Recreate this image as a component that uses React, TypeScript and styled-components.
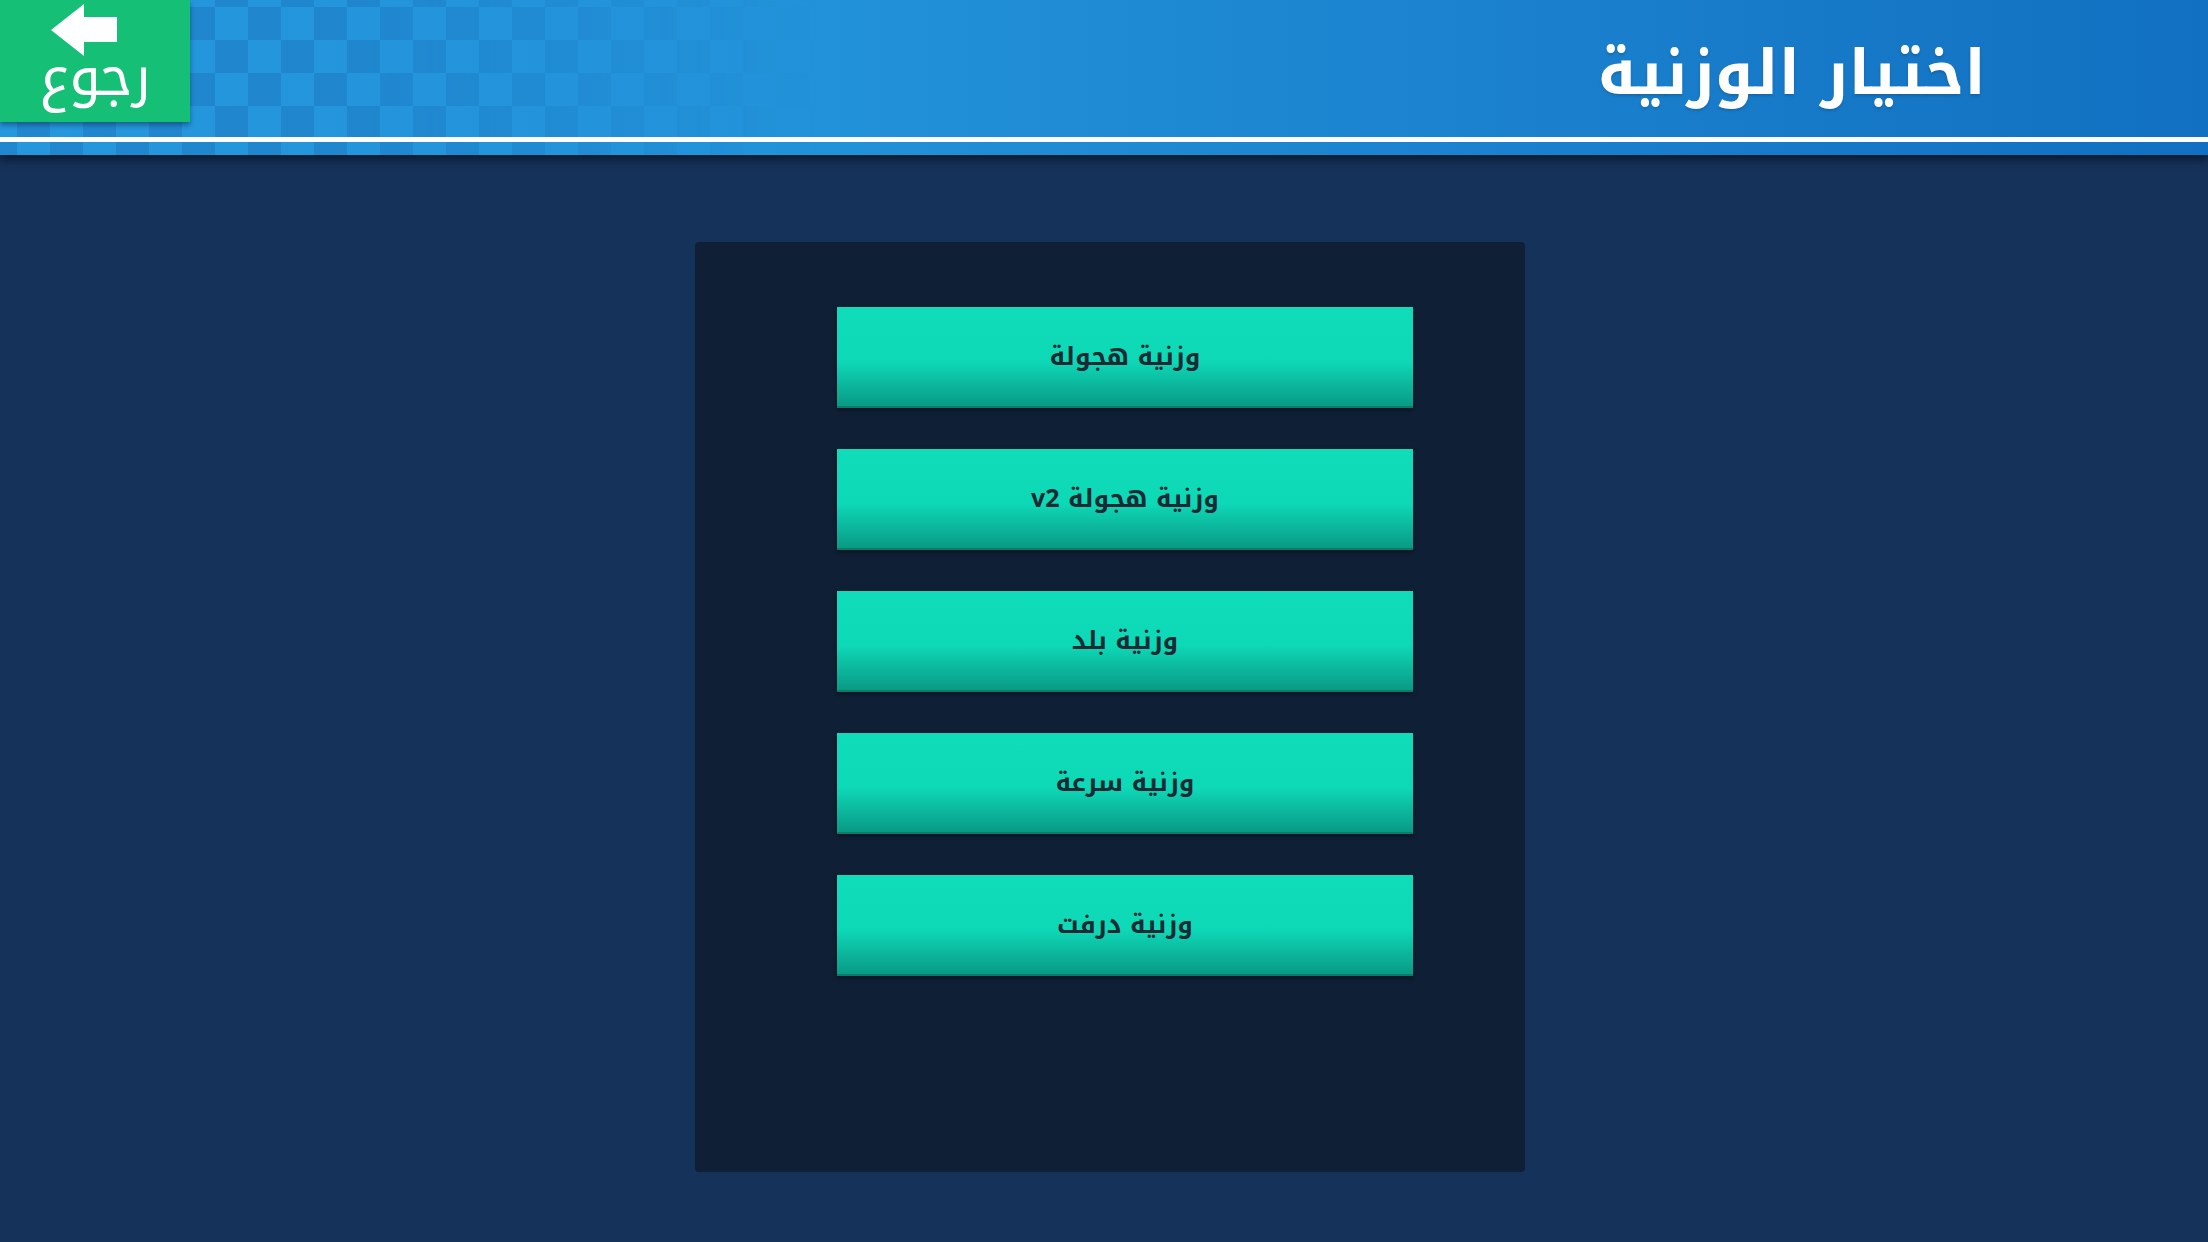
import React from 'react';
import styled, { createGlobalStyle } from 'styled-components';

const ARABIC = `"Noto Kufi Arabic", "Noto Sans Arabic", "DejaVu Sans", sans-serif`;

const GlobalStyle = createGlobalStyle`
  html, body {
    margin: 0;
    padding: 0;
    background: #15325a;
  }
  body {
    font-family: ${ARABIC};
  }
`;

const Page = styled.div`
  width: 2208px;
  height: 1242px;
  background: #15325a;
  display: flex;
  flex-direction: column;
  overflow: hidden;
`;

const Header = styled.header`
  position: relative;
  height: 155px;
  flex-shrink: 0;
  background: linear-gradient(90deg, #2597dd 0%, #2293da 35%, #1a80cd 70%, #1170c1 100%);
  box-shadow: 0 4px 10px rgba(0, 0, 0, 0.55);
  display: flex;
  flex-direction: column;
  z-index: 1;

  &::before {
    content: '';
    position: absolute;
    inset: 0;
    background-image: conic-gradient(
      rgba(10, 60, 140, 0.16) 0 25%,
      transparent 0 50%,
      rgba(10, 60, 140, 0.16) 0 75%,
      transparent 0
    );
    background-size: 66px 66px;
    background-position: 17px 7px;
    -webkit-mask-image: linear-gradient(90deg, #000 0%, #000 360px, transparent 820px);
    mask-image: linear-gradient(90deg, #000 0%, #000 360px, transparent 820px);
    pointer-events: none;
  }
`;

const Bar = styled.div`
  position: relative;
  height: 137px;
  display: flex;
  justify-content: space-between;
  align-items: flex-start;
`;

const Rule = styled.div`
  position: relative;
  height: 5px;
  background: #ffffff;
`;

const BackButton = styled.button`
  width: 190px;
  height: 122px;
  border: none;
  padding: 4px 0 0;
  background: #15bf75;
  box-shadow: 0 3px 5px rgba(0, 0, 0, 0.35);
  display: flex;
  flex-direction: column;
  align-items: center;
  cursor: pointer;

  svg {
    margin-right: 20px;
  }
`;

const BackLabel = styled.span`
  font-family: ${ARABIC};
  font-size: 56px;
  line-height: 56px;
  color: #ffffff;
  margin-top: -8px;
`;

const Title = styled.h1`
  margin: 34px 222px 0 0;
  font-family: ${ARABIC};
  font-weight: 700;
  font-size: 62px;
  line-height: 80px;
  color: #ffffff;
  direction: rtl;
  text-shadow: 0 2px 3px rgba(0, 0, 0, 0.15);
`;

const Main = styled.main`
  flex: 1;
  display: flex;
  justify-content: center;
  padding: 87px 0 70px 12px;
`;

const Panel = styled.section`
  width: 830px;
  background: #0f1f35;
  border-radius: 4px;
  display: flex;
  flex-direction: column;
  align-items: center;
  gap: 41px;
  padding: 65px 0 0 30px;
  box-sizing: border-box;
`;

const OptionButton = styled.button`
  width: 576px;
  height: 101px;
  border: none;
  border-bottom: 2px solid #0a7c6c;
  box-sizing: border-box;
  background: linear-gradient(
    180deg,
    #0fdcb9 0%,
    #0ed9b6 55%,
    #0bb89e 78%,
    #099a85 100%
  );
  box-shadow: 0 2px 4px rgba(0, 0, 0, 0.35);
  font-family: ${ARABIC};
  font-weight: 700;
  font-size: 25px;
  color: #1c2a34;
  direction: rtl;
  cursor: pointer;
  padding: 0;
`;

const options = ['وزنية هجولة', 'وزنية هجولة v2', 'وزنية بلد', 'وزنية سرعة', 'وزنية درفت'];

const BackArrow = () => (
  <svg width="68" height="52" viewBox="0 0 68 52">
    <polygon points="0,26 33,0 33,13 66,13 66,38 33,38 33,52" fill="#ffffff" />
  </svg>
);

export default function App() {
  return (
    <Page>
      <GlobalStyle />
      <Header>
        <Bar>
          <BackButton>
            <BackArrow />
            <BackLabel>رجوع</BackLabel>
          </BackButton>
          <Title>اختيار الوزنية</Title>
        </Bar>
        <Rule />
      </Header>
      <Main>
        <Panel>
          {options.map((label) => (
            <OptionButton key={label}>{label}</OptionButton>
          ))}
        </Panel>
      </Main>
    </Page>
  );
}
